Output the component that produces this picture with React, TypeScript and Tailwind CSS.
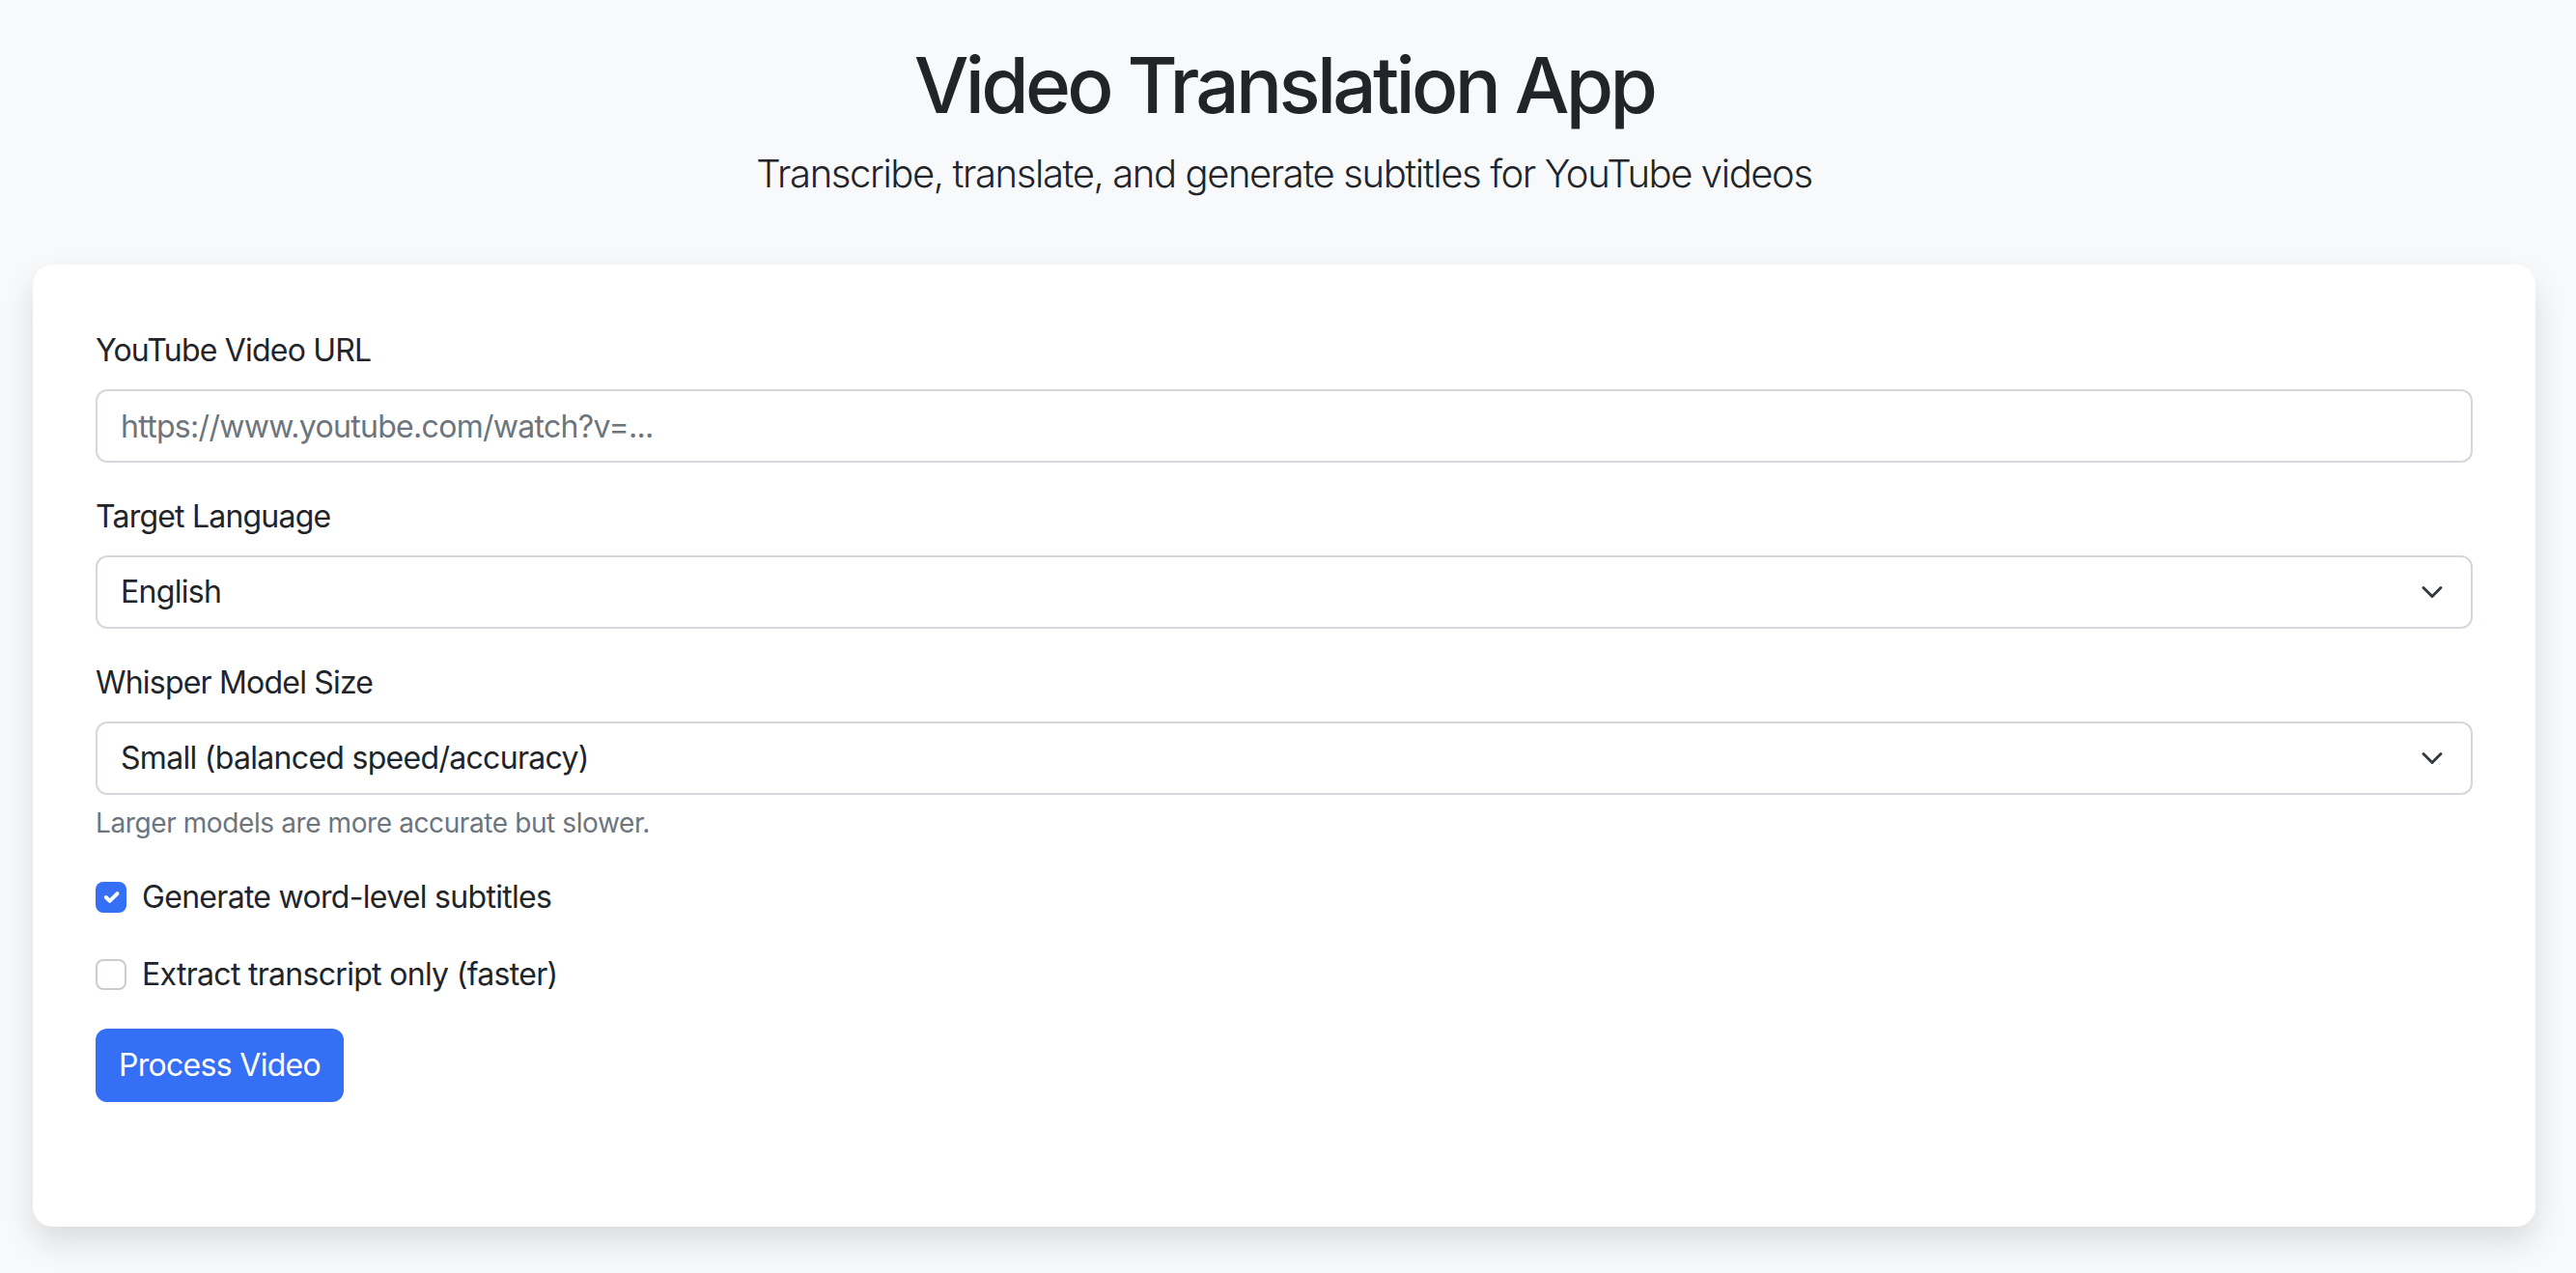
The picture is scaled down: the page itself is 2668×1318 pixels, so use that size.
import React from "react";

function Chevron() {
  return (
    <svg
      className="pointer-events-none absolute right-[30px] top-1/2 -translate-y-1/2"
      width="24"
      height="24"
      viewBox="0 0 16 16"
      fill="none"
    >
      <path d="m2 5 6 6 6-6" stroke="#343a40" strokeWidth="2" strokeLinecap="round" strokeLinejoin="round" />
    </svg>
  );
}

export default function App() {
  return (
    <div className="min-h-screen bg-[#f8f9fa] pl-[34px] pr-[42px] pt-[40px] pb-[50px] text-[#212529] font-['Inter','Noto_Sans',sans-serif]">
      <h1 className="mb-[14px] text-center text-[80px] font-medium leading-[96px] tracking-[-3.7px]">
        Video Translation App
      </h1>
      <p className="mb-[64px] text-center text-[40px] font-light leading-[60px] tracking-[-1.4px]">
        Transcribe, translate, and generate subtitles for YouTube videos
      </p>

      <div className="rounded-[20px] border border-white bg-white px-[64px] pt-[64px] pb-[128px] shadow-[0_16px_32px_rgba(0,0,0,0.12)]">
        <div className="mb-[32px]">
          <label className="mb-[16px] block text-[32px] leading-[48px] tracking-[-0.8px]">YouTube Video URL</label>
          <input
            type="text"
            placeholder="https://www.youtube.com/watch?v=..."
            className="block h-[76px] w-full rounded-[12px] border-2 border-[#d4d8dc] bg-white px-[24px] text-[32px] leading-[48px] tracking-[-0.7px] text-[#212529] outline-none placeholder:text-[#6c757d]"
          />
        </div>

        <div className="mb-[32px]">
          <label className="mb-[16px] block text-[32px] leading-[48px] tracking-[-0.8px]">Target Language</label>
          <div className="relative">
            <div className="flex h-[76px] w-full items-center rounded-[12px] border-2 border-[#d4d8dc] bg-white px-[24px] text-[32px] leading-[48px] tracking-[-0.7px]">
              English
            </div>
            <Chevron />
          </div>
        </div>

        <div className="mb-[32px]">
          <label className="mb-[16px] block text-[32px] leading-[48px] tracking-[-0.8px]">Whisper Model Size</label>
          <div className="relative">
            <div className="flex h-[76px] w-full items-center rounded-[12px] border-2 border-[#d4d8dc] bg-white px-[24px] text-[32px] leading-[48px] tracking-[-0.7px]">
              Small (balanced speed/accuracy)
            </div>
            <Chevron />
          </div>
          <div className="mt-[8px] text-[28px] leading-[42px] tracking-[-0.4px] text-[#6c757d]">
            Larger models are more accurate but slower.
          </div>
        </div>

        <div className="mb-[32px] flex h-[48px] items-center">
          <span className="flex h-[32px] w-[32px] items-center justify-center rounded-[8px] bg-[#346ff5]">
            <svg width="26" height="26" viewBox="0 0 20 20" fill="none">
              <path d="m6 10 3 3 6-6" stroke="#fff" strokeWidth="3" strokeLinecap="round" strokeLinejoin="round" />
            </svg>
          </span>
          <span className="ml-[16px] text-[32px] leading-[48px] tracking-[-0.7px]">Generate word-level subtitles</span>
        </div>

        <div className="mb-[32px] flex h-[48px] items-center">
          <span className="h-[32px] w-[32px] rounded-[8px] border-2 border-[#c9ccd0] bg-white" />
          <span className="ml-[16px] text-[32px] leading-[48px] tracking-[-0.7px]">Extract transcript only (faster)</span>
        </div>

        <button className="h-[76px] rounded-[12px] bg-[#346ff5] px-[24px] text-[32px] leading-[48px] tracking-[-0.7px] text-white">
          Process Video
        </button>
      </div>
    </div>
  );
}
